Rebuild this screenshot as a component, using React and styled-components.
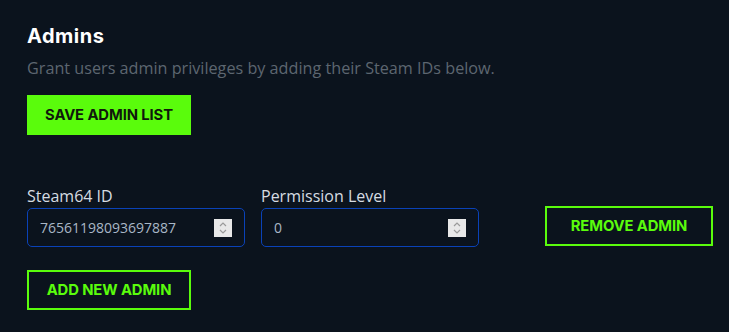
import React, { useState } from "react";
import styled, { createGlobalStyle } from "styled-components";

const GlobalStyle = createGlobalStyle`
    html, body {
        margin: 0;
        padding: 0;
        background: #0b131d;
    }

    body {
        font-family: "Open Sans", "Liberation Sans", sans-serif;
        color: #d6dce2;
    }
`;

const Section = styled.section`
    width: 729px;
    height: 332px;
    box-sizing: border-box;
    padding: 24px 17px 0 27px;
`;

const Title = styled.h2`
    margin: 0;
    font-family: Inter, "Liberation Sans", sans-serif;
    font-size: 20px;
    font-weight: 700;
    line-height: 24px;
    color: #ffffff;
    letter-spacing: 0.5px;
`;

const Subtitle = styled.p`
    margin: 8px 0 15px;
    font-size: 16.2px;
    line-height: 24px;
    color: #5d6670;
`;

const Button = styled.button`
    display: inline-flex;
    align-items: center;
    justify-content: center;
    box-sizing: border-box;
    height: 40px;
    width: ${({ $width }) => $width}px;
    padding: 0;
    font-family: Inter, "Liberation Sans", sans-serif;
    font-size: 14.8px;
    font-weight: 700;
    letter-spacing: -0.1px;
    cursor: pointer;
    border: 2px solid #5afc0c;
    background: ${({ $solid }) => ($solid ? "#5afc0c" : "transparent")};
    color: ${({ $solid }) => ($solid ? "#10180c" : "#5afc0c")};
`;

const Rows = styled.div`
    margin-top: 51px;
    display: flex;
    flex-direction: column;
    gap: 23px;
`;

const Row = styled.div`
    display: flex;
    align-items: flex-end;
`;

const Field = styled.label`
    display: flex;
    flex-direction: column;
    width: 218px;
    margin-right: 16px;
`;

const Label = styled.span`
    font-size: 16px;
    line-height: 20px;
    margin-bottom: 2px;
    color: #d6dce2;
`;

const InputBox = styled.div`
    display: flex;
    align-items: center;
    box-sizing: border-box;
    height: 39px;
    padding: 0 12px;
    border: 1.5px solid #0a42b8;
    border-radius: 5px;
`;

const Input = styled.input`
    flex: 1;
    min-width: 0;
    border: none;
    outline: none;
    background: transparent;
    font-family: "Open Sans", "Liberation Sans", sans-serif;
    font-size: 14px;
    color: #a9b7c6;
    padding: 0;

    &::-webkit-inner-spin-button,
    &::-webkit-outer-spin-button {
        -webkit-appearance: none;
        margin: 0;
    }
`;

const Spinner = styled.span`
    width: 18px;
    height: 18px;
    background: #e8e8e8;
    display: flex;
    align-items: center;
    justify-content: center;
`;

const Actions = styled.div`
    margin-left: 50px;
    margin-bottom: 1px;
`;

const SpinIcon = () => (
    <Spinner>
        <svg width="10" height="14" viewBox="0 0 10 14">
            <path d="M2 5 L5 2 L8 5 M2 9 L5 12 L8 9" fill="none" stroke="#9a9a9a" strokeWidth="1.2" />
        </svg>
    </Spinner>
);

const NumberField = ({ label, value, onChange }) => (
    <Field>
        <Label>{label}</Label>
        <InputBox>
            <Input type="number" value={value} onChange={(e) => onChange(e.target.value)} />
            <SpinIcon />
        </InputBox>
    </Field>
);

const App = () => {
    const [admins, setAdmins] = useState([{ id: "76561198093697887", level: "0" }]);

    const update = (index, key, value) => {
        setAdmins(admins.map((a, i) => (i === index ? { ...a, [key]: value } : a)));
    };

    return (
        <Section>
            <GlobalStyle />
            <Title>Admins</Title>
            <Subtitle>Grant users admin privileges by adding their Steam IDs below.</Subtitle>
            <Button $solid $width={164}>SAVE ADMIN LIST</Button>

            <Rows>
                {admins.map((admin, i) => (
                    <Row key={i}>
                        <NumberField label="Steam64 ID" value={admin.id} onChange={(v) => update(i, "id", v)} />
                        <NumberField label="Permission Level" value={admin.level} onChange={(v) => update(i, "level", v)} />
                        <Actions>
                            <Button $width={168} onClick={() => setAdmins(admins.filter((_, j) => j !== i))}>
                                REMOVE ADMIN
                            </Button>
                        </Actions>
                    </Row>
                ))}
                <div>
                    <Button $width={164} onClick={() => setAdmins([...admins, { id: "", level: "0" }])}>
                        ADD NEW ADMIN
                    </Button>
                </div>
            </Rows>
        </Section>
    );
};

export default App;
